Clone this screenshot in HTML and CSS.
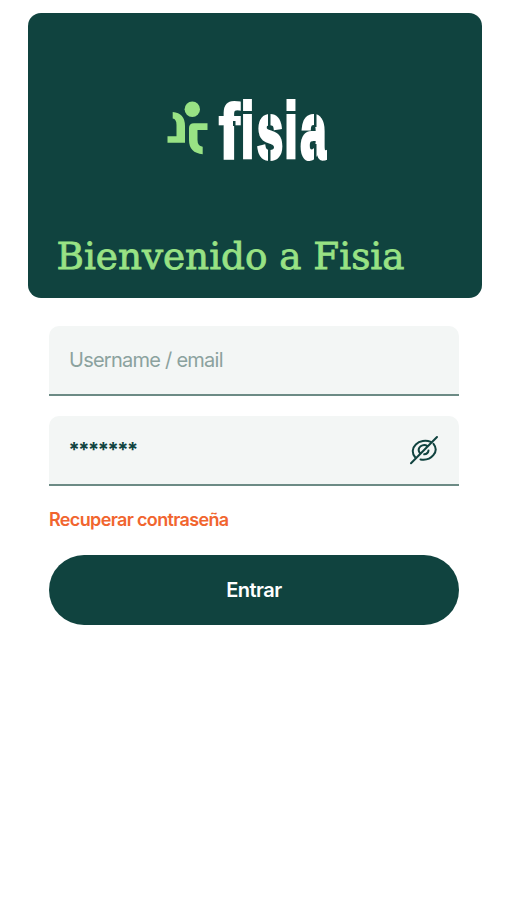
FILE: index.html
```html
<!DOCTYPE html>
<html lang="es">
<head>
<meta charset="utf-8">
<meta name="viewport" content="width=device-width, initial-scale=1">
<title>Fisia</title>
<link rel="stylesheet" href="styles.css">
</head>
<body>
<main class="screen">
  <header class="hero">
    <svg class="logo" viewBox="0 0 164 66" width="164" height="66" role="img" aria-label="fisia">
      <g class="mark">
        <circle cx="25.300" cy="12.300" r="7.700"/>
        <path d="M5.700 15Q18 16 18 29V45.700H.5V39.300H9.500V28Q9.500 22 5.700 21.500Z"/>
        <path d="M40.500 26.300V33H30.500V43Q30.500 49 35.700 49.700V57.200Q22 56 22 43V31Q22 26.300 27 26.300Z"/>
      </g>
      <g class="wordmark">
        <text class="wide" transform="translate(51.500 61.500) scale(.82 1)">f</text>
        <text transform="translate(0 60.500) scale(.6 1)" x="123.200 150 195.700 222.500">isia</text>
      </g>
      <g class="cuts">
        <rect x="66" y="24" width="2.500" height="5"/>
        <rect x="101" y="15" width="2.500" height="15"/>
        <rect x="101" y="49" width="2.500" height="15"/>
        <rect x="147" y="15" width="2.500" height="15"/>
        <rect x="147" y="47" width="2.500" height="17"/>
        <rect x="160" y="52" width="4" height="13"/>
      </g>
    </svg>
    <h1 class="title">
      <svg width="350" height="44" viewBox="0 0 350 44"><text x="-.5" y="35.500" textLength="348" lengthAdjust="spacingAndGlyphs">Bienvenido a Fisia</text></svg>
    </h1>
  </header>
  <form class="form">
    <label class="field"><input class="input" type="text" placeholder="Username / email" aria-label="Username / email"></label>
    <div class="field">
      <span class="secret">*******</span>
      <svg class="eye" viewBox="0 0 30 30" width="30" height="30">
        <path d="M21.800 6.900A12.500 10.300 0 0 0 6 22M11.500 24.500A12.500 10.300 0 0 0 24.500 8.800"/>
        <path d="M18.500 11A5.500 5 0 0 0 10.500 17.500M15.200 19.300Q19 19 19.500 15.500M2 28.200 28 2"/>
      </svg>
    </div>
    <a class="recover">Recuperar contraseña</a>
    <button class="submit" type="button">Entrar</button>
  </form>
</main>
</body>
</html>
```
FILE: styles.css
```css
* { box-sizing: border-box; }
body { margin: 0; background: #fff; font-family: Inter, sans-serif; }
.screen { padding: 13px 25px 0 28px; }
.hero {
  height: 285px;
  padding: 84px 0 0 29px;
  border-radius: 13px;
  background: #10433f;
}
.logo { display: block; margin-left: 110px; overflow: visible; }
.mark { fill: #98e284; }
.wordmark {
  font: 700 78px "Liberation Sans", sans-serif;
  fill: #fff;
  stroke: #fff;
  stroke-width: 4;
}
.wide { stroke-width: 2; }
.cuts { fill: #10433f; }
.title { margin: 70px 0 0; height: 44px; }
.title svg { display: block; overflow: visible; }
.title text { font: 400 37.5px "DejaVu Serif", serif; fill: #98e284; stroke: #98e284; stroke-width: .8; }
.form { display: flex; flex-direction: column; padding: 28px 23px 0 21px; }
.field {
  display: flex;
  align-items: center;
  justify-content: space-between;
  height: 70px;
  margin-bottom: 20px;
  padding: 0 20px;
  border-bottom: 2px solid #6c8b85;
  border-radius: 10px 10px 0 0;
  background: #f3f6f5;
}
.input {
  width: 100%;
  padding: 0 0 1px;
  border: 0;
  outline: 0;
  background: none;
  font: 400 20px Inter, sans-serif;
  letter-spacing: -.75px;
}
.input::placeholder { color: #8ba29e; opacity: 1; }
.secret { margin-left: -.5px; font-size: 20px; font-weight: 700; letter-spacing: -1.45px; color: #10433f; }
.eye { fill: none; stroke: #10433f; stroke-width: 2; stroke-linecap: round; }
.recover { align-self: flex-start; margin-top: 2px; color: #f1652f; font-size: 18px; line-height: 24px; font-weight: 600; letter-spacing: -.65px; }
.submit {
  height: 70px;
  margin-top: 23px;
  border: 0;
  border-radius: 35px;
  background: #10433f;
  color: #fff;
  font: 600 20px Inter, sans-serif;
  letter-spacing: -.5px;
}
```
